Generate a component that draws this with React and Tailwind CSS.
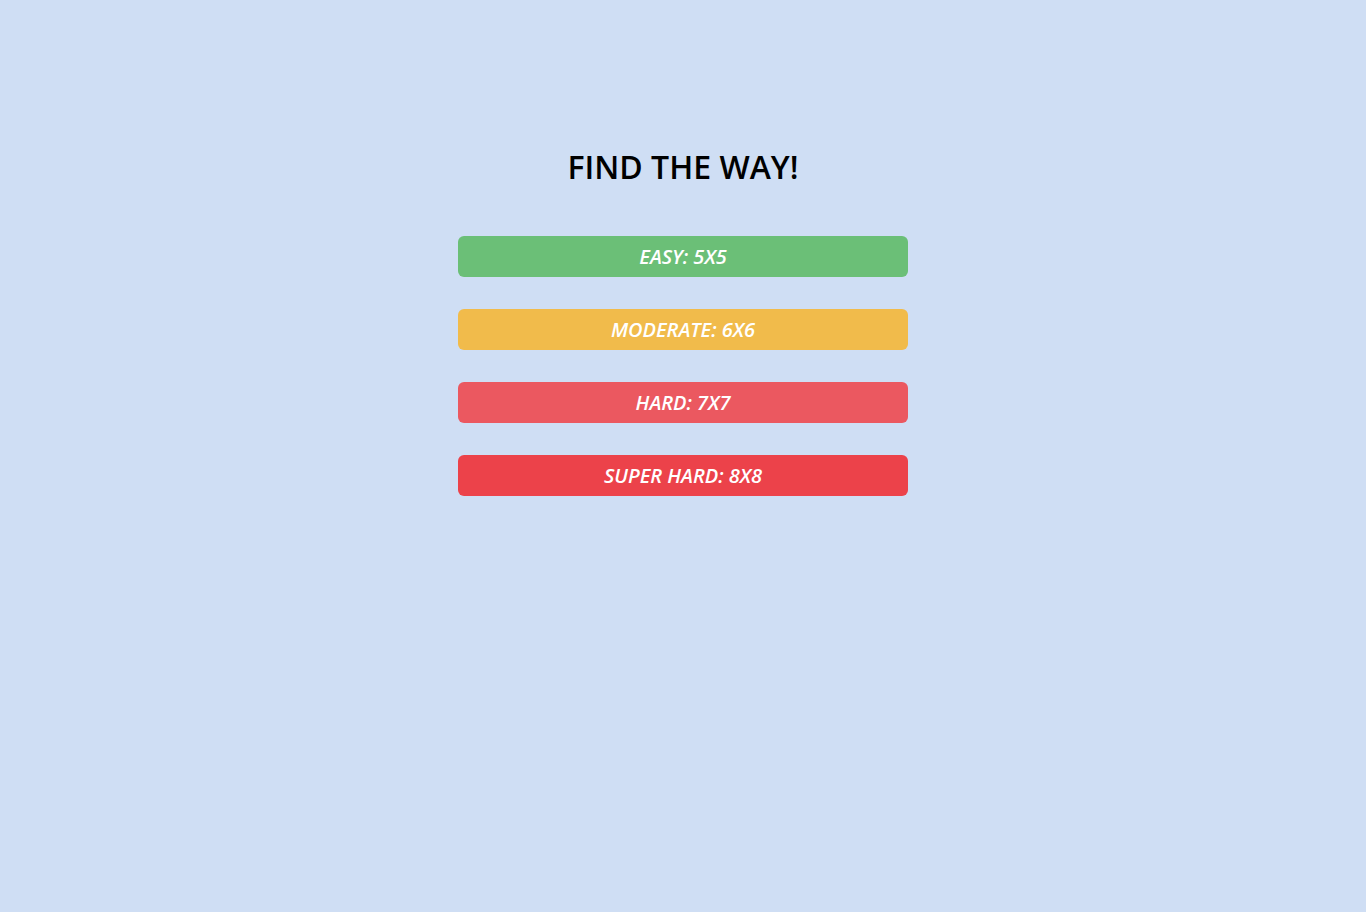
const levels = [
  { label: 'EASY: 5X5', color: 'bg-[#6bbf77]' },
  { label: 'MODERATE: 6X6', color: 'bg-[#f1bb4b]' },
  { label: 'HARD: 7X7', color: 'bg-[#eb5860]' },
  { label: 'SUPER HARD: 8X8', color: 'bg-[#ec424a]' },
];

export default function App() {
  return (
    <div className="min-h-[912px] w-full bg-[#cfdef4] font-['Open_Sans',sans-serif] flex flex-col items-center pt-[145px]">
      <h1 className="text-[32px] leading-[44px] font-semibold text-black">FIND THE WAY!</h1>
      <div className="mt-[47px] flex flex-col gap-[32px] w-[450px]">
        {levels.map((l) => (
          <button
            key={l.label}
            className={`${l.color} h-[41px] w-full rounded-[6px] text-white italic font-semibold text-[20px] leading-none`}
          >
            {l.label}
          </button>
        ))}
      </div>
    </div>
  );
}
